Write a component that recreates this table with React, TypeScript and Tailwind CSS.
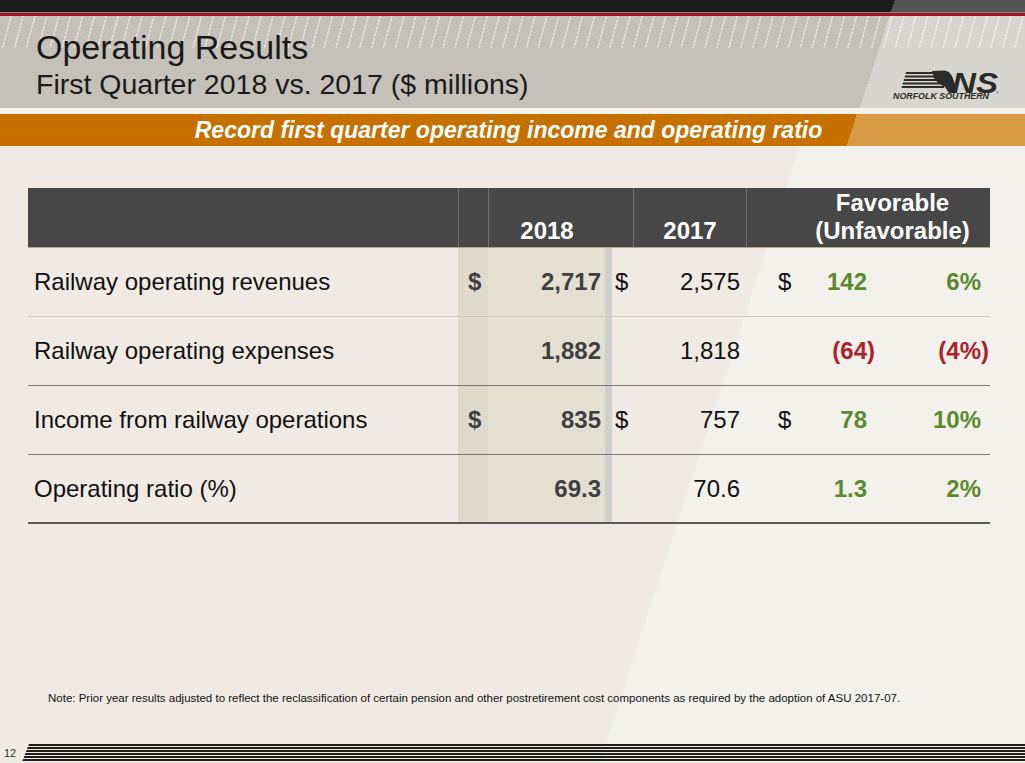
const rows = [
  { label: "Railway operating revenues", d: true, y18: "2,717", y17: "2,575", fav: "142", pct: "6%", neg: false, line: "border-[#cfccc6]" },
  { label: "Railway operating expenses", d: false, y18: "1,882", y17: "1,818", fav: "(64)", pct: "(4%)", neg: true, line: "border-[#7a7a7a]" },
  { label: "Income from railway operations", d: true, y18: "835", y17: "757", fav: "78", pct: "10%", neg: false, line: "border-[#7a7a7a]" },
  { label: "Operating ratio (%)", d: false, y18: "69.3", y17: "70.6", fav: "1.3", pct: "2%", neg: false, line: "border-[#5a5a5a]" },
]

function Logo() {
  return (
    <svg width="114" height="36" viewBox="0 0 114 36" className="mb-[6px] mr-[23px]">
      {/* speed lines */}
      <g fill="#2b2b2b">
        <polygon points="18,6 50,6 50,8 17.5,8" />
        <polygon points="17,9.5 50,9.5 50,11.5 16.5,11.5" />
        <polygon points="16,13 52,13 52,15 15.5,15" />
        <polygon points="15,16.5 54,16.5 54,18.5 14.5,18.5" />
        <polygon points="14,20 56,20 56,22 13.5,22" />
        {/* horse head */}
        <polygon points="44,5 57,4.5 61,6 64,10 69,24 67,27 61,27 57,21 50,17 46,12" />
      </g>
      <text x="64" y="27" fontFamily="'Liberation Sans', Arial, sans-serif" fontWeight="bold" fontStyle="italic" fontSize="29" fill="#2b2b2b" textLength="46" lengthAdjust="spacingAndGlyphs">
        NS
      </text>
      <text x="5" y="33" fontFamily="'Liberation Sans', Arial, sans-serif" fontWeight="bold" fontStyle="italic" fontSize="8.5" fill="#2b2b2b" textLength="96" lengthAdjust="spacingAndGlyphs">
        NORFOLK SOUTHERN
      </text>
      <text x="108" y="28" fontFamily="'Liberation Sans', Arial, sans-serif" fontSize="4" fill="#2b2b2b">®</text>
    </svg>
  )
}

function Paren({ show }: { show: boolean }) {
  // accounting-style alignment: positives keep room for the closing paren
  return show ? null : <span className="invisible">)</span>
}

export default function App() {
  return (
    <div className="w-[1025px] h-[763px] flex flex-col overflow-hidden font-['Liberation_Sans',Arial,sans-serif] text-[#111]">
      {/* Top bar */}
      <div className="h-[12px] bg-[linear-gradient(108deg,#1c1c1c_851px,#535353_851px)]" />
      <div className="h-px bg-[#8a8a8a]" />
      <div className="h-[3px] bg-[#a0161b]" />

      {/* Title band */}
      <header className="h-[92px] flex justify-between items-end [background:repeating-linear-gradient(105deg,transparent_0_10px,rgba(255,255,255,0.45)_10px_11.5px)_top/100%_32px_no-repeat,linear-gradient(108deg,#c4c1b9_846px,#d7d5cf_846px)]">
        <div className="self-start pt-[12px] pl-[36px]">
          <h1 className="text-[34px] leading-[39px] text-[#1a1a1a]">Operating Results</h1>
          <h2 className="text-[28.5px] leading-[34px] text-[#1a1a1a]">First Quarter 2018 vs. 2017 ($ millions)</h2>
        </div>
        <Logo />
      </header>
      <div className="h-[6px] bg-[#f3f1ea]" />

      {/* Orange banner */}
      <div className="h-[32px] flex items-center justify-center pr-[8px] bg-[linear-gradient(108deg,#c67000_815px,#d89a45_815px)]">
        <p className="text-white font-bold italic text-[23px] leading-none">
          Record first quarter operating income and operating ratio
        </p>
      </div>

      {/* Body */}
      <main className="flex-1 flex flex-col bg-[linear-gradient(108deg,#efebe4_761px,#f3f1ec_761px)]">
        <div className="mt-[42px] ml-[28px] w-[962px]">
          {/* Table header */}
          <div className="grid grid-cols-[430px_30px_145px_113px_244px] h-[60px] bg-[#474747] border-b border-[#b3a98a] text-white font-bold text-[24px] leading-[28px]">
            <div />
            <div className="border-l border-[#707070]" />
            <div className="border-l border-[#707070] flex items-end justify-center pr-[28px] pb-[2px]">2018</div>
            <div className="border-l border-[#707070] flex items-end justify-center pb-[2px]">2017</div>
            <div className="border-l border-[#707070] flex items-end justify-center pl-[48px] pb-[2px] text-center">
              <span>
                Favorable
                <br />
                (Unfavorable)
              </span>
            </div>
          </div>

          {/* Table rows */}
          {rows.map((r, i) => (
            <div
              key={r.label}
              className={`grid grid-cols-[430px_30px_117px_7px_21px_113px_54px_75px_115px] text-[24px] ${i === 3 ? "h-[69px] border-b-2" : "h-[69px] border-b"} ${r.line}`}
            >
              <div className="flex items-center pl-[6px]">{r.label}</div>
              <div className="flex items-center pl-[10px] bg-[#dfdbcc] font-bold text-[#3f3f3f]">{r.d ? "$" : ""}</div>
              <div className="flex items-center justify-end pr-[4px] bg-[#e3e0d2] font-bold text-[#3f3f3f]">{r.y18}</div>
              <div className="bg-[#cfcfcc]" />
              <div className="flex items-center pl-[3px]">{r.d ? "$" : ""}</div>
              <div className="flex items-center justify-end pr-[6px]">{r.y17}</div>
              <div className="flex items-center pl-[32px]">{r.d ? "$" : ""}</div>
              <div className={`flex items-center justify-end font-bold ${r.neg ? "text-[#b01f2a]" : "text-[#5b8a2c]"}`}>
                {r.fav}
                <Paren show={r.neg} />
              </div>
              <div className={`flex items-center justify-end pr-[1px] font-bold ${r.neg ? "text-[#b01f2a]" : "text-[#5b8a2c]"}`}>
                {r.pct}
                <Paren show={r.neg} />
              </div>
            </div>
          ))}
        </div>

        <p className="mt-[167px] pl-[48px] text-[11.5px] leading-[14px] text-[#111]">
          Note: Prior year results adjusted to reflect the reclassification of certain pension and other postretirement cost components as required by the adoption of ASU 2017-07.
        </p>

        {/* Footer */}
        <div className="mt-auto mb-px flex items-center">
          <span className="w-[22px] pl-[4px] text-[11px] text-[#333]">12</span>
          <div className="flex-1 h-[18px] bg-[repeating-linear-gradient(to_bottom,#1f1f1f_0_1.5px,transparent_1.5px_3px)] [clip-path:polygon(7px_0,100%_0,100%_100%,0_100%)]" />
        </div>
      </main>
    </div>
  )
}
